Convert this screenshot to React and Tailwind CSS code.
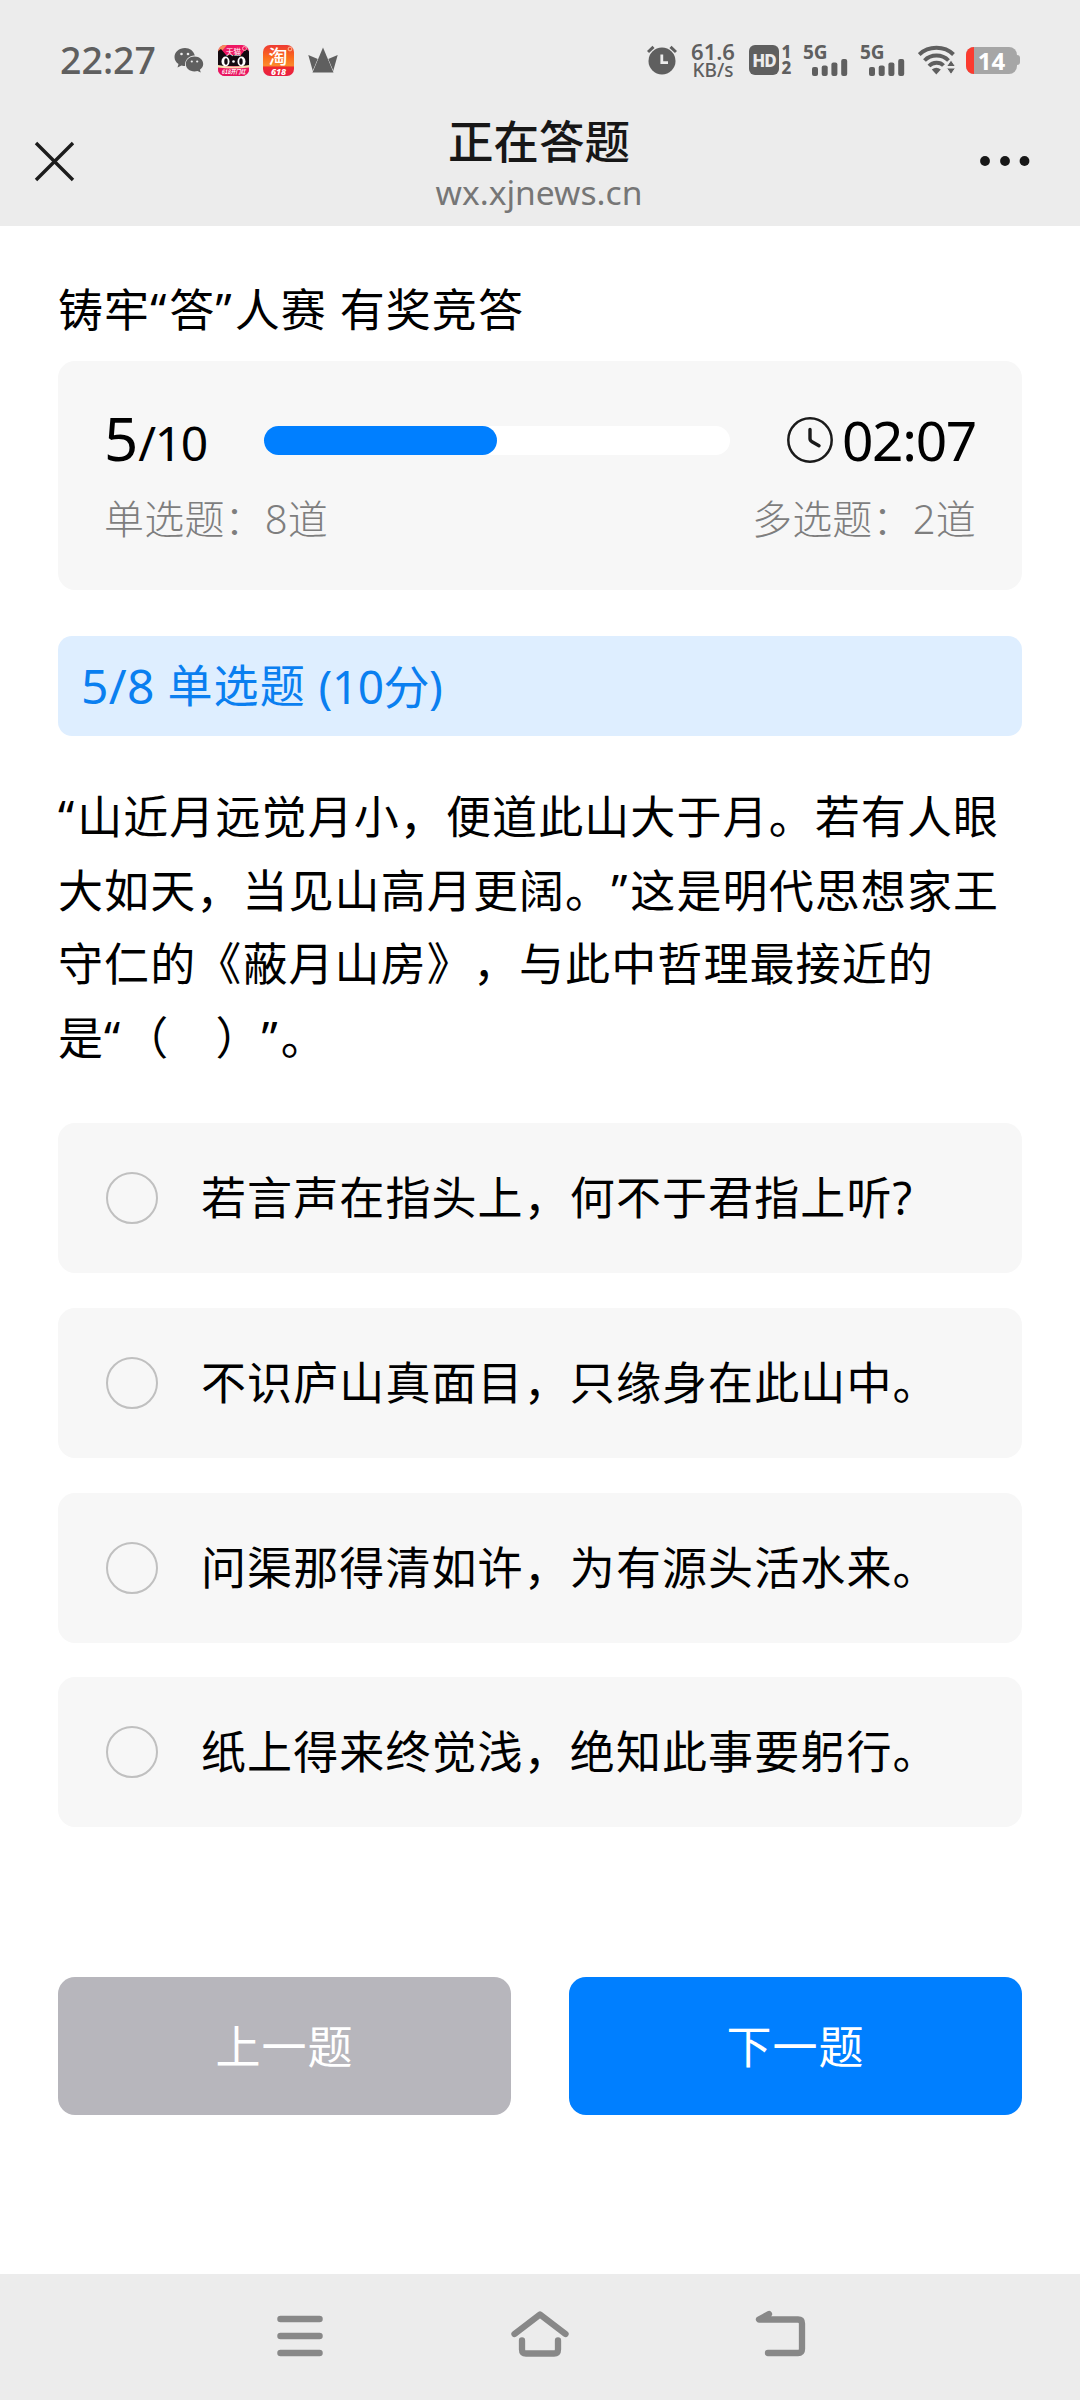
import React from "react";

function WeChatIcon() {
  return (
    <svg className="ml-[16px] h-[26px] w-[30px]" viewBox="0 0 30 26">
      <path fill="#5f5f5f" d="M11 1C5 1 .5 5 .5 10c0 3 1.600 5.400 4 7l-1 3.500 4-2c1.500.400 2.500.500 3.600.500A9 9 0 0 1 20.800 8.600C19.800 4 15.800 1 11 1Z" />
      <path fill="#5f5f5f" d="M20.500 9.600c-5 0-8.700 3.300-8.700 7.400s3.700 7.400 8.700 7.400c1 0 2-.200 3-.500l3.300 1.700-.900-2.900c2-1.400 3.300-3.400 3.300-5.700 0-4.100-3.700-7.400-8.700-7.400Z" />
      <circle cx="7.500" cy="7" r="1.300" fill="#ececec" />
      <circle cx="14" cy="7" r="1.300" fill="#ececec" />
      <circle cx="17.800" cy="14.500" r="1.100" fill="#ececec" />
      <circle cx="23.200" cy="14.500" r="1.100" fill="#ececec" />
    </svg>
  );
}

function TmallIcon() {
  return (
    <svg className="ml-[14px] h-[31px] w-[31px] overflow-visible" viewBox="0 0 31 31">
      <defs>
        <clipPath id="tmallClip">
          <rect width="31" height="31" rx="7" />
        </clipPath>
      </defs>
      <g clipPath="url(#tmallClip)">
        <rect width="31" height="31" fill="#ee1763" />
        <path d="M0 0h9L3 7 0 8Z" fill="#f58a5a" />
        <path d="M0 6l3-2 5 6h15l5-6 3 2v15H0Z" fill="#130a10" />
        <path d="M0 20q15 3 31 0v4H0Z" fill="#f6dfae" />
        <path d="M0 22.500q15 2 31 0V31H0Z" fill="#e9155f" />
        <ellipse cx="7.500" cy="16.500" rx="4" ry="5" fill="#fff" />
        <ellipse cx="23.500" cy="16.500" rx="4" ry="5" fill="#fff" />
        <ellipse cx="8" cy="16.500" rx="1.700" ry="3.300" fill="#130a10" />
        <ellipse cx="23" cy="16.500" rx="1.700" ry="3.300" fill="#130a10" />
        <circle cx="15.500" cy="16.500" r="1.300" fill="#fff" />
        <circle cx="26.500" cy="3.500" r="2" fill="none" stroke="#fbb" strokeWidth=".9" />
      </g>
      <text x="15.500" y="9.500" textAnchor="middle" fontSize="7.500" fill="#fff" fontFamily="Noto Sans CJK SC, sans-serif">天猫</text>
      <text x="15.500" y="28.500" textAnchor="middle" fontSize="6" fontWeight="700" fontStyle="italic" textLength="24" lengthAdjust="spacingAndGlyphs" fill="#fff" fontFamily="Noto Sans CJK SC, sans-serif">618开门红</text>
    </svg>
  );
}

function TaobaoIcon() {
  return (
    <svg className="ml-[14px] h-[31px] w-[31px] overflow-visible" viewBox="0 0 31 31">
      <defs>
        <linearGradient id="taobaoFill" x1="0" y1="0" x2="0" y2="1">
          <stop offset="0" stopColor="#ee3a33" />
          <stop offset=".4" stopColor="#fb6b1c" />
          <stop offset=".66" stopColor="#fb8a2c" />
          <stop offset=".72" stopColor="#ee2a2f" />
          <stop offset="1" stopColor="#e91f45" />
        </linearGradient>
      </defs>
      <rect width="31" height="31" rx="7" fill="url(#taobaoFill)" />
      <circle cx="27" cy="4" r="1.900" fill="none" stroke="#fdc9a0" strokeWidth=".9" />
      <text x="15" y="18.500" textAnchor="middle" fontSize="19" fontWeight="500" fill="#fff" fontFamily="Noto Sans CJK SC, sans-serif">淘</text>
      <text x="15.500" y="29.500" textAnchor="middle" fontSize="9" fontWeight="800" fontStyle="italic" fill="#fff" fontFamily="Noto Sans, sans-serif">618</text>
    </svg>
  );
}

function CrownIcon() {
  return (
    <svg className="ml-[14px] h-[26px] w-[30px]" viewBox="0 0 30 26" fill="#5f5f5f">
      <path d="M.3 8 11 12.500 4.800 24Z" />
      <path d="M29.700 8 19 12.500 25.200 24Z" />
      <path d="M15 .5 25.500 25.500h-21Z" stroke="#ececec" strokeWidth="1" paintOrder="stroke" />
    </svg>
  );
}

function AlarmIcon() {
  return (
    <svg className="h-[30px] w-[30px]" viewBox="0 0 30 30">
      <circle cx="15" cy="16" r="13.500" fill="#5f5f5f" />
      <path d="M1 7 6.500 1.800M29 7l-5.500-5.200" stroke="#5f5f5f" strokeWidth="3" fill="none" />
      <path d="M14.800 9.500v8.200h6.200" stroke="#ececec" strokeWidth="2.800" fill="none" />
    </svg>
  );
}

function HdBadge() {
  return (
    <div className="ml-[13px] flex items-center text-[#5f5f5f]">
      <div className="flex h-[30px] w-[30px] items-center justify-center rounded-[6px] bg-[#5f5f5f] text-[17px] leading-none font-extrabold tracking-[-1px] text-[#ececec]">HD</div>
      <div className="ml-[2px] flex w-[11px] flex-col items-center text-[17px] leading-[16px] font-extrabold">
        <span>1</span>
        <span>2</span>
      </div>
    </div>
  );
}

function Signal() {
  return (
    <div className="flex h-[32px] w-[46px] flex-col">
      <span className="h-[15px] text-[19px] leading-[16px] font-bold text-[#5f5f5f]">5G</span>
      <svg className="ml-[9px] h-[17px] w-[36px]" viewBox="0 0 36 17" fill="#5f5f5f">
        <rect x="0" y="8" width="6" height="9" rx="2" />
        <rect x="9.700" y="6.500" width="6" height="10.500" rx="2" />
        <rect x="19.400" y="3.500" width="6" height="13.500" rx="2" />
        <rect x="29.200" y="0" width="6" height="17" rx="2" />
      </svg>
    </div>
  );
}

function WifiIcon() {
  return (
    <svg className="ml-[12px] h-[30px] w-[37px]" viewBox="0 0 37 30">
      <g fill="none" stroke="#5f5f5f" strokeWidth="3.900">
        <path d="M1.200 9.500C10.500.5 26.500.5 35.500 9.500" />
        <path d="M6.500 15.500c6.500-6.600 17.500-6.600 24 0" />
        <path d="M11 21c4-4.300 11-4.300 14.500-.500" />
      </g>
      <path d="M13.800 24.500q4.500-3.500 9 0L18.300 29.500Z" fill="#5f5f5f" />
      <path d="M33 15l4.500 6.500h-9ZM33 29.500l-4.500-6.500h9Z" fill="#5f5f5f" stroke="#ececec" strokeWidth="1" />
    </svg>
  );
}

function Battery() {
  return (
    <div className="ml-[11px] flex items-center">
      <div className="flex h-[27px] w-[51px] rounded-[8px] bg-[#a6a6a6]">
        <div className="w-[8px] rounded-l-[8px] bg-[#fb3b2f]" />
        <div className="flex flex-1 justify-center pr-[8px] text-[24px] leading-[27px] font-bold text-white">14</div>
      </div>
      <div className="h-[10px] w-[3px] rounded-r-[3px] bg-[#a6a6a6]" />
    </div>
  );
}

function StatusBar() {
  return (
    <div className="flex h-[120px] items-center justify-between pr-[60px] pl-[60px]">
      <div className="flex items-center">
        <span className="w-[98px] text-[37.500px] leading-[40px] font-medium text-[#5f5f5f]">22:27</span>
        <WeChatIcon />
        <TmallIcon />
        <TaobaoIcon />
        <CrownIcon />
      </div>
      <div className="flex items-center">
        <AlarmIcon />
        <div className="ml-[13px] flex w-[46px] flex-col items-center font-semibold text-[#5f5f5f]">
          <span className="text-[22px] leading-[19px]">61.6</span>
          <span className="text-[19px] leading-[18px] font-medium">KB/s</span>
        </div>
        <HdBadge />
        <div className="ml-[11px] flex gap-[11px]">
          <Signal />
          <Signal />
        </div>
        <WifiIcon />
        <Battery />
      </div>
    </div>
  );
}

function NavBar() {
  return (
    <div className="grid h-[106px] grid-cols-[1fr_auto_1fr] items-start pr-[50px] pl-[34px]">
      <svg className="mt-[21px] h-[41px] w-[41px]" viewBox="0 0 41 41" fill="none" stroke="#1c1c1c" strokeWidth="3.400">
        <path d="M2 2 39 39M39 2 2 39" />
      </svg>
      <div className="flex flex-col items-center pl-[14px]">
        <h1 className="text-[45.500px] leading-[43px] font-medium text-[#171717]">正在答题</h1>
        <span className="mt-[9px] text-[33.600px] leading-[40px] text-[#767676]">wx.xjnews.cn</span>
      </div>
      <svg className="mt-[36px] h-[10px] w-[50px] justify-self-end" viewBox="0 0 50 10" fill="#171717">
        <circle cx="5" cy="5" r="4.900" />
        <circle cx="25" cy="5" r="4.900" />
        <circle cx="44.500" cy="5" r="4.900" />
      </svg>
    </div>
  );
}

function ProgressCard({ current, total, time }) {
  return (
    <section className="mt-[27px] h-[229px] rounded-[17px] bg-[#f7f7f7] px-[46px] pt-[43px] text-black">
      <div className="flex h-[72px] items-center">
        <div className="flex w-[160px] items-baseline leading-[72px]">
          <span className="text-[60px]">{current}</span>
          <span className="text-[48px] tracking-[-1.500px]">/{total}</span>
        </div>
        <div className="h-[29px] w-[466px] rounded-full bg-white">
          <div className="h-full rounded-full bg-[#007fff]" style={{ width: `${(current / total) * 100}%` }} />
        </div>
        <svg className="ml-auto h-[46px] w-[46px]" viewBox="0 0 46 46" fill="none" stroke="#1a1a1a">
          <circle cx="23" cy="23" r="21.700" strokeWidth="2.500" />
          <path d="M23 12.500V21.500q0 2.200 2 3.200l7 4" strokeWidth="3.400" strokeLinecap="round" strokeLinejoin="round" />
        </svg>
        <span className="ml-[9px] text-[55px] leading-[72px] tracking-[-1.300px]">{time}</span>
      </div>
      <div className="mt-[18px] flex justify-between text-[40px] leading-[50px] font-light tracking-[0.200px] text-[#7e7e7e]">
        <span>单选题：8道</span>
        <span>多选题：2道</span>
      </div>
    </section>
  );
}

const options = [
  "若言声在指头上，何不于君指上听?",
  "不识庐山真面目，只缘身在此山中。",
  "问渠那得清如许，为有源头活水来。",
  "纸上得来终觉浅，绝知此事要躬行。",
];

function Option({ label }) {
  return (
    <li className="flex h-[150px] items-center rounded-[17px] bg-[#f7f7f7] pl-[47.500px]">
      <span className="h-[52px] w-[52px] rounded-full border-2 border-[#c0c0c0]" />
      <span className="ml-[43.500px] text-[45px] leading-[70px] tracking-[1.100px] text-black">{label}</span>
    </li>
  );
}

function Quote({ children }) {
  return <span className="tracking-[3px]">{children}</span>;
}

function SystemNav() {
  return (
    <div className="flex h-[126px] items-start bg-[#ececec] pt-[36px]">
      <svg className="ml-[276px] h-[48px] w-[48px]" viewBox="0 0 48 48" stroke="#888" strokeWidth="6.500" strokeLinecap="round">
        <path d="M4.500 9h39M4.500 26h39M4.500 43h39" />
      </svg>
      <svg className="ml-[186px] h-[50px] w-[60px]" viewBox="0 0 60 50" fill="none" stroke="#888" strokeWidth="6.300" strokeLinecap="round" strokeLinejoin="round">
        <path d="M4.500 24 30 4.500l25.500 19.500" />
        <path d="M12 30.500v9q0 4 4 4h28q4 0 4-4v-9" />
      </svg>
      <svg className="ml-[184px] h-[48px] w-[52px]" viewBox="0 0 52 48" fill="none" stroke="#888" strokeWidth="6.300" strokeLinecap="round" strokeLinejoin="round">
        <path d="M15 4 5 9.500h39q4 0 4 4v25.500q0 4-4 4H14" />
      </svg>
    </div>
  );
}

export default function App() {
  return (
    <div
      lang="zh-CN"
      className="flex h-[2400px] w-[1080px] flex-col bg-white font-['Noto_Sans','Noto_Sans_CJK_SC',sans-serif] whitespace-nowrap [text-spacing-trim:space-all]"
    >
      <header className="h-[226px] bg-[#ececec]">
        <StatusBar />
        <NavBar />
      </header>

      <main className="flex-1 px-[58px]">
        <h2 className="mt-[60px] text-[45px] leading-[48px] tracking-[1.100px] text-black">
          铸牢<Quote>“</Quote>答<Quote>”</Quote>人赛 有奖竞答
        </h2>

        <ProgressCard current={5} total={10} time="02:07" />

        <div className="mt-[46px] flex h-[100px] items-center rounded-[14px] bg-[#deeeff] pl-[23px] text-[45px] tracking-[1.100px] whitespace-pre text-[#0a7ff0]">
          <span className="text-[48px] tracking-[0.300px]">5/8</span>
          <span> 单选题 </span>
          <span className="text-[46px] tracking-[-0.500px]">(10分)</span>
        </div>

        <p className="mt-[44px] text-[45px] leading-[73.600px] tracking-[1.100px] text-black">
          <Quote>“</Quote>山近月远觉月小，便道此山大于月。若有人眼
          <br />
          大如天，当见山高月更阔。<Quote>”</Quote>这是明代思想家王
          <br />
          守仁的《蔽月山房》，与此中哲理最接近的
          <br />
          是<Quote>“</Quote>（　）<Quote>”</Quote>。
        </p>

        <ul className="mt-[49px] flex flex-col gap-[34.700px]">
          {options.map((label) => (
            <Option key={label} label={label} />
          ))}
        </ul>

        <div className="mt-[150px] grid grid-cols-2 gap-[58px] text-[45px] tracking-[1px] text-white">
          <button className="h-[138px] rounded-[17px] bg-[#b7b6bc]">上一题</button>
          <button className="h-[138px] rounded-[17px] bg-[#007fff]">下一题</button>
        </div>
      </main>

      <SystemNav />
    </div>
  );
}
